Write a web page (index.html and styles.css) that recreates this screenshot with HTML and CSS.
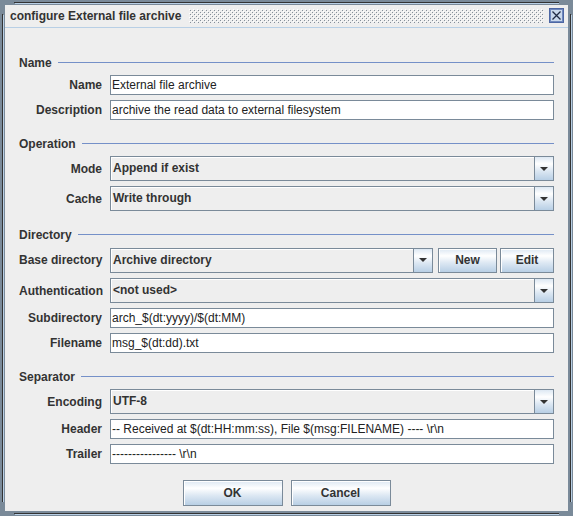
FILE: index.html
```html
<!DOCTYPE html>
<html>
<head>
<meta charset="utf-8">
<link rel="stylesheet" href="styles.css">
</head>
<body>
<div class="window">
  <div class="titlebar">
    <span class="title">configure External file archive</span>
    <svg class="bumps" xmlns="http://www.w3.org/2000/svg">
      <defs>
        <pattern id="bp" width="4" height="4" patternUnits="userSpaceOnUse">
          <rect x="0" y="0" width="1" height="1" fill="#ffffff"/>
          <rect x="2" y="2" width="1" height="1" fill="#ffffff"/>
          <rect x="1" y="1" width="1" height="1" fill="#858f9a"/>
          <rect x="3" y="3" width="1" height="1" fill="#858f9a"/>
        </pattern>
      </defs>
      <rect width="100%" height="100%" fill="url(#bp)"/>
    </svg>
    <svg class="close" width="15" height="15" viewBox="0 0 15 15" xmlns="http://www.w3.org/2000/svg">
      <rect x="0.5" y="0.5" width="14" height="14" fill="#ffffff" stroke="#4c66a3"/>
      <rect x="1.5" y="1.5" width="12" height="12" fill="#c9d8ec" stroke="#6f88bd" stroke-width="1"/>
      <path d="M3.5 3.5 L11.5 11.5 M11.5 3.5 L3.5 11.5" stroke="#1f2a44" stroke-width="1.3" fill="none"/>
    </svg>
  </div>
  <div class="content">
    <section class="group">
      <div class="group-title"><span>Name</span><span class="rule"></span></div>
      <div class="form">
        <span class="lbl">Name</span><div class="field">External file archive</div>
        <span class="lbl">Description</span><div class="field">archive the read data to external filesystem</div>
      </div>
    </section>
    <section class="group">
      <div class="group-title"><span>Operation</span><span class="rule"></span></div>
      <div class="form">
        <span class="lbl">Mode</span>
        <div class="combo"><span class="combo-text">Append if exist</span><span class="arrow"><span class="tri"></span></span></div>
        <span class="lbl">Cache</span>
        <div class="combo"><span class="combo-text">Write through</span><span class="arrow"><span class="tri"></span></span></div>
      </div>
    </section>
    <section class="group">
      <div class="group-title"><span>Directory</span><span class="rule"></span></div>
      <div class="form">
        <span class="lbl">Base directory</span>
        <div class="combo-row">
          <div class="combo grow"><span class="combo-text">Archive directory</span><span class="arrow narrow"><span class="tri"></span></span></div>
          <button class="btn btn-new">New</button>
          <button class="btn btn-edit">Edit</button>
        </div>
        <span class="lbl">Authentication</span>
        <div class="combo"><span class="combo-text">&lt;not used&gt;</span><span class="arrow"><span class="tri"></span></span></div>
        <span class="lbl">Subdirectory</span><div class="field">arch_$(dt:yyyy)/$(dt:MM)</div>
        <span class="lbl">Filename</span><div class="field">msg_$(dt:dd).txt</div>
      </div>
    </section>
    <section class="group">
      <div class="group-title"><span>Separator</span><span class="rule"></span></div>
      <div class="form">
        <span class="lbl">Encoding</span>
        <div class="combo"><span class="combo-text">UTF-8</span><span class="arrow"><span class="tri"></span></span></div>
        <span class="lbl">Header</span><div class="field">-- Received at $(dt:HH:mm:ss), File $(msg:FILENAME) ---- \r\n</div>
        <span class="lbl">Trailer</span><div class="field">---------------- \r\n</div>
      </div>
    </section>
    <div class="buttons">
      <button class="btn btn-dlg">OK</button>
      <button class="btn btn-dlg">Cancel</button>
    </div>
  </div>
</div>
</body>
</html>
```
FILE: styles.css
```css
* { box-sizing: border-box; }
html, body {
  margin: 0;
  padding: 0;
  width: 573px;
  height: 516px;
  overflow: hidden;
  font-family: "Liberation Sans", Arial, sans-serif;
  font-size: 12px;
  color: #333333;
}
.window {
  width: 573px;
  height: 516px;
  padding: 5px;
  display: flex;
  flex-direction: column;
  background:
    linear-gradient(#333, #333) 14px 2px / calc(100% - 28px) 1px no-repeat,
    linear-gradient(#b8cfe5, #b8cfe5) 15px 3px / calc(100% - 29px) 1px no-repeat,
    linear-gradient(#333, #333) 2px 14px / 1px calc(100% - 28px) no-repeat,
    linear-gradient(#b8cfe5, #b8cfe5) 3px 15px / 1px calc(100% - 29px) no-repeat,
    linear-gradient(#333, #333) right 2px top 14px / 1px calc(100% - 28px) no-repeat,
    linear-gradient(#b8cfe5, #b8cfe5) right 1px top 15px / 1px calc(100% - 29px) no-repeat,
    linear-gradient(#333, #333) left 14px bottom 2px / calc(100% - 28px) 1px no-repeat,
    linear-gradient(#b8cfe5, #b8cfe5) left 15px bottom 1px / calc(100% - 29px) 1px no-repeat,
    #7a8a99;
}
.titlebar {
  height: 23px;
  flex: none;
  display: flex;
  align-items: center;
  background: #eeeeee;
  border-bottom: 1px solid #b8cfe5;
  padding: 0 4px 1px 5px;
}
.title {
  font-weight: bold;
  white-space: nowrap;
  color: #333333;
}
.bumps {
  display: block;
  flex: 1;
  height: 14px;
  margin: 0 5px 0 8px;
}
.close {
  display: block;
  flex: none;
}
.content {
  flex: 1;
  background: #eeeeee;
  padding: 27px 14px 0 14px;
  display: flex;
  flex-direction: column;
  gap: 16px;
}
.group-title {
  display: flex;
  align-items: center;
  height: 15px;
  font-weight: bold;
  gap: 6px;
}
.rule {
  flex: 1;
  height: 1px;
  background: #7590c8;
}
.form {
  margin-top: 5px;
  display: grid;
  grid-template-columns: 83px 1fr;
  column-gap: 8px;
  row-gap: 5px;
  align-items: center;
}
.lbl {
  font-weight: bold;
  text-align: right;
  white-space: nowrap;
}
.field {
  height: 20px;
  line-height: 18px;
  background: #ffffff;
  border: 1px solid #7a8a99;
  padding-left: 1px;
  white-space: nowrap;
  overflow: hidden;
  color: #222;
}
.combo {
  height: 25px;
  display: flex;
  border: 1px solid #7a8a99;
  background: #eeeeee;
  box-shadow: inset 1px 1px #ffffff;
}
.combo-text {
  flex: 1;
  line-height: 23px;
  padding-left: 2px;
  font-weight: bold;
  white-space: nowrap;
  overflow: hidden;
}
.arrow {
  flex: none;
  width: 19px;
  border-left: 1px solid #7a8a99;
  background: linear-gradient(#dde8f3 0%, #ffffff 30%, #dde8f3 60%, #b8cfe5 100%);
  display: flex;
  align-items: center;
  justify-content: center;
}
.tri {
  width: 0;
  height: 0;
  border-left: 4px solid transparent;
  border-right: 4px solid transparent;
  border-top: 4px solid #333333;
}
.combo-row {
  display: flex;
  align-items: center;
  height: 26px;
}
.combo-row .combo { height: 25px; }
.grow { flex: 1; }
.btn {
  font-family: "Liberation Sans", Arial, sans-serif;
  font-size: 12px;
  font-weight: bold;
  color: #333333;
  border: 1px solid #7a8a99;
  box-shadow: inset 1px 1px #ffffff;
  background: linear-gradient(#dde8f3 0%, #ffffff 30%, #dde8f3 60%, #b8cfe5 100%);
  padding: 0;
  margin: 0;
}
.btn-new { width: 59px; height: 25px; margin-left: 5px; }
.btn-edit { width: 54px; height: 25px; margin-left: 3px; }
.buttons {
  display: flex;
  justify-content: center;
  gap: 8px;
}
.btn-dlg { width: 100px; height: 26px; }
```
